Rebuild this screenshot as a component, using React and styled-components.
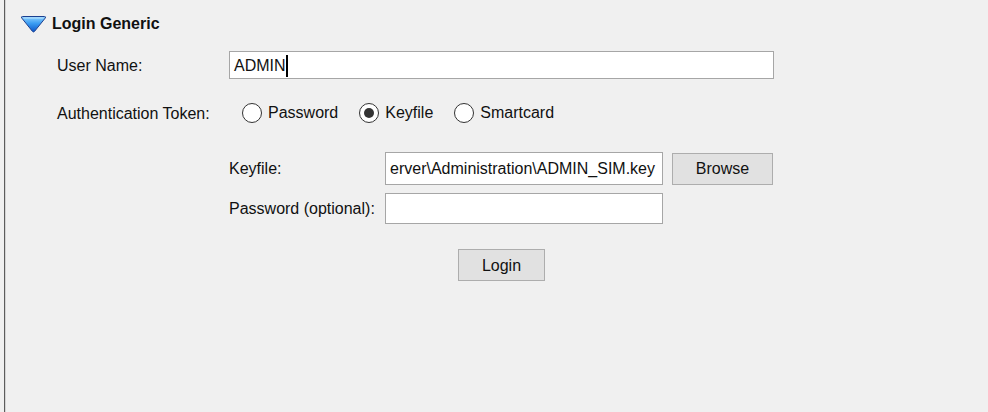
import React from 'react';
import styled, { createGlobalStyle } from 'styled-components';

const GlobalStyle = createGlobalStyle`
  html, body {
    margin: 0;
    padding: 0;
    background: #f0f0f0;
  }
  body {
    font-family: "Liberation Sans", Arial, sans-serif;
    font-size: 16px;
    color: #111;
  }
`;

const Panel = styled.div`
  margin-left: 4px;
  height: 412px;
  box-sizing: border-box;
  border-left: 1px solid #5c5c5c;
  box-shadow: inset 1px 0 0 #d4d4d4;
  padding: 14px 0 0 15px;
`;

const Header = styled.div`
  display: flex;
  align-items: center;
  gap: 5px;
  height: 18px;
  padding-top: 1px;
  font-weight: bold;
  font-size: 16px;
`;

const Form = styled.div`
  display: flex;
  flex-direction: column;
  padding: 18px 0 0 37px;
  width: 717px;
`;

const Row = styled.div`
  display: grid;
  grid-template-columns: ${p => p.$label}px 1fr;
  align-items: center;
  height: ${p => p.$h}px;
  margin-top: ${p => p.$top || 0}px;
`;

const Label = styled.span`
  white-space: nowrap;
  padding-top: 1px;
`;

const Field = styled.div`
  box-sizing: border-box;
  height: ${p => p.$h}px;
  width: ${p => (p.$w ? `${p.$w}px` : '100%')};
  background: #fff;
  border: 1px solid #a6a6a6;
  display: flex;
  align-items: center;
  justify-content: ${p => (p.$end ? 'flex-end' : 'flex-start')};
  padding: 1px ${p => (p.$end ? 7 : 4)}px 0 4px;
  overflow: hidden;
  white-space: nowrap;
`;

const Caret = styled.span`
  display: inline-block;
  width: 2px;
  height: 22px;
  background: #000;
`;

const RadioGroup = styled.div`
  display: flex;
  align-items: center;
  padding-left: 13px;
  gap: 21px;
`;

const RadioItem = styled.label`
  display: flex;
  align-items: center;
  gap: 6px;
`;

const Circle = styled.span`
  box-sizing: border-box;
  width: 20px;
  height: 20px;
  border-radius: 50%;
  border: 1px solid #333;
  background: #fff;
  display: flex;
  align-items: center;
  justify-content: center;
  &::after {
    content: '';
    width: 10px;
    height: 10px;
    border-radius: 50%;
    background: ${p => (p.$on ? '#333' : 'transparent')};
  }
`;

const Sub = styled.div`
  display: flex;
  flex-direction: column;
  margin-left: 172px;
  width: 545px;
  margin-top: 28px;
`;

const Inline = styled.div`
  display: flex;
  align-items: center;
  gap: 9px;
`;

const Button = styled.button`
  box-sizing: border-box;
  width: ${p => p.$w}px;
  height: 32px;
  background: #e1e1e1;
  border: 1px solid #adadad;
  font-family: inherit;
  font-size: 16px;
  color: #111;
  padding: 1px 0 0;
`;

const Center = styled.div`
  display: flex;
  justify-content: center;
  margin-top: 25px;
`;

const TriangleIcon = () => (
  <svg width="27" height="18" viewBox="0 0 27 18">
    <defs>
      <linearGradient id="tri" x1="0" y1="0" x2="0" y2="1">
        <stop offset="0" stopColor="#8fd2ff" />
        <stop offset="0.45" stopColor="#3a9cf2" />
        <stop offset="1" stopColor="#0b55c8" />
      </linearGradient>
    </defs>
    <path
      d="M2.5 1.5 H24.5 Q26.3 1.5 25.2 3.1 L14.6 16.3 Q13.5 17.6 12.4 16.3 L1.8 3.1 Q0.7 1.5 2.5 1.5 Z"
      fill="url(#tri)"
      stroke="#1c3f8f"
      strokeWidth="1"
    />
    <path d="M3.5 3 H23.5" stroke="#c9ecff" strokeWidth="1" opacity="0.8" />
  </svg>
);

const Radio = ({ label, on }) => (
  <RadioItem>
    <Circle $on={on} />
    {label}
  </RadioItem>
);

export default function App() {
  return (
    <>
      <GlobalStyle />
      <Panel>
        <Header>
          <TriangleIcon />
          Login Generic
        </Header>
        <Form>
          <Row $label={172} $h={28}>
            <Label>User Name:</Label>
            <Field $h={28}>
              ADMIN<Caret />
            </Field>
          </Row>
          <Row $label={172} $h={22} $top={23}>
            <Label>Authentication Token:</Label>
            <RadioGroup>
              <Radio label="Password" />
              <Radio label="Keyfile" on />
              <Radio label="Smartcard" />
            </RadioGroup>
          </Row>
          <Sub>
            <Row $label={156} $h={33}>
              <Label>Keyfile:</Label>
              <Inline>
                <Field $h={33} $w={278} $end>
                  erver\Administration\ADMIN_SIM.key
                </Field>
                <Button $w={101}>Browse</Button>
              </Inline>
            </Row>
            <Row $label={156} $h={31} $top={8}>
              <Label>Password (optional):</Label>
              <Field $h={31} $w={278} />
            </Row>
            <Center>
              <Button $w={87}>Login</Button>
            </Center>
          </Sub>
        </Form>
      </Panel>
    </>
  );
}
